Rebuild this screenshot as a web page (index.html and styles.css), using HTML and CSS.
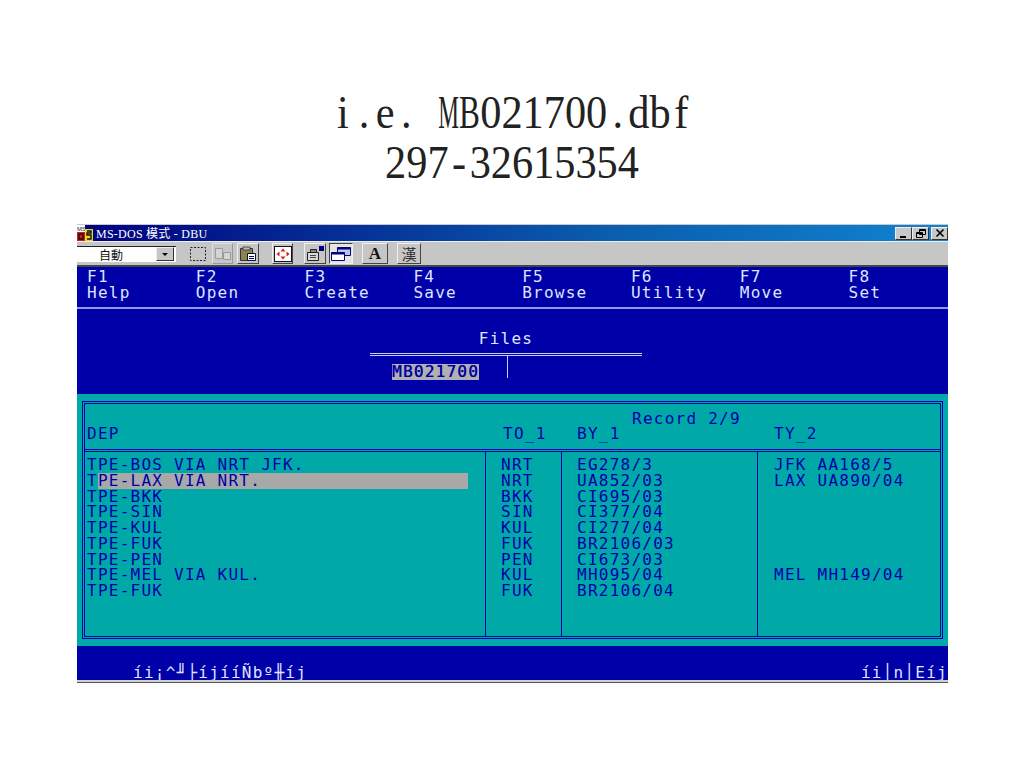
FILE: index.html
```html
<!DOCTYPE html>
<html>
<head>
    <title>MS-DOS - DBU</title>
    <link rel="stylesheet" href="styles.css">
</head>
<body>
    <div class="slide-title">
        <div class="title-line"><span>i</span><span>.</span><span>e</span><span>.</span><span> </span><span class="cap-m">M</span><span class="cap-b">B</span><span>0</span><span>2</span><span>1</span><span>7</span><span>0</span><span>0</span><span>.</span><span>d</span><span>b</span><span>f</span></div>
        <div class="title-line"><span>2</span><span>9</span><span>7</span><span>-</span><span>3</span><span>2</span><span>6</span><span>1</span><span>5</span><span>3</span><span>5</span><span>4</span></div>
    </div>

    <div class="window">
        <div class="titlebar">
            <svg class="app-icon" width="16" height="16" viewBox="0 0 16 16">
                <rect x="0" y="0" width="8" height="8" fill="#fff"/>
                <text x="0" y="6" class="ms-text">MS</text>
                <rect x="0" y="7" width="8" height="9" fill="#e01818"/>
                <rect x="8" y="4" width="8" height="12" fill="#e8d820"/>
                <path d="M2 9h4v5H2zM10 6h4v2h-4v2h4v4h-4" fill="none" stroke="#111" stroke-width="1.4"/>
            </svg>
            <span class="title-text">MS-DOS 模式 - DBU</span>
            <div class="win-buttons">
                <div class="win-btn"><svg width="14" height="12" viewBox="0 0 14 12"><path d="M3 9h6v2H3z" fill="#000"/></svg></div>
                <div class="win-btn"><svg width="14" height="12" viewBox="0 0 14 12"><path d="M5.500 2.500h6v5h-6zM5.500 3.500h6M2.500 5.500h6v5h-6zM2.500 6.500h6" fill="none" stroke="#000"/></svg></div>
                <div class="win-btn close-btn"><svg width="14" height="12" viewBox="0 0 14 12"><path d="M3.500 2.500l7 7M10.500 2.500l-7 7" fill="none" stroke="#000" stroke-width="1.6"/></svg></div>
            </div>
        </div>

        <div class="toolbar">
            <div class="combo">
                <span class="combo-text">自動</span>
                <div class="combo-btn"><svg width="8" height="6" viewBox="0 0 8 6"><path d="M1 2h6L4 5z" fill="#000"/></svg></div>
            </div>
            <div class="tool t-mark"><svg width="18" height="16" viewBox="0 0 18 16"><rect x="1.500" y="1.500" width="15" height="13" fill="none" stroke="#222" stroke-dasharray="2 1.500"/></svg></div>
            <div class="tool t-copy"><svg width="18" height="16" viewBox="0 0 18 16"><path d="M1.500 2.500h7v10h-7zM9.500 6.500h7v7h-7z" fill="#d4d4d4" stroke="#9a9a9a"/></svg></div>
            <div class="tool t-paste"><svg width="18" height="16" viewBox="0 0 18 16"><path d="M1.500 2.500h12v12h-12z" fill="#8c8450" stroke="#333"/><path d="M4 1h7v3H4z" fill="#bbb" stroke="#333" stroke-width=".8"/><path d="M8.500 7.500h8v7h-8z" fill="#fff" stroke="#112"/><path d="M10 10h5v1h-5zM10 12h5v1h-5z" fill="#000080"/></svg></div>
            <div class="tool t-full"><svg width="20" height="18" viewBox="0 0 20 18"><rect x="1.500" y="1.500" width="17" height="15" fill="#fff" stroke="#112"/><path d="M10 3.500l2.500 3h-5zM10 14.500l2.500-3h-5zM3.500 9l3-2.500v5zM16.500 9l-3-2.500v5z" fill="#d02020"/></svg></div>
            <div class="tool t-prop"><svg width="20" height="18" viewBox="0 0 20 18"><path d="M2.500 7.500h11v8h-11z" fill="#d8d8d8" stroke="#222"/><path d="M5.500 4.500h6v3h-6z" fill="#888" stroke="#222"/><path d="M14 1h5v5h-5z" fill="#000080"/><path d="M5 10h6v1H5zM5 12h6v1H5z" fill="#444"/></svg></div>
            <div class="tool t-back pressed"><svg width="20" height="18" viewBox="0 0 20 18"><path d="M6.500 2.500h13v8h-13z" fill="#b8c4e0" stroke="#000080"/><path d="M6.500 2.500h13v2h-13z" fill="#000080"/><path d="M.5 7.500h13v8H.5z" fill="#fff" stroke="#000080"/><path d="M.5 7.500h13v2H.5z" fill="#000080"/></svg></div>
            <div class="tool t-font"><span class="font-a">A</span></div>
            <div class="tool t-han"><span class="han">漢</span></div>
        </div>

        <div class="screen">
            <div class="menu">
                <div class="menu-item">F1<br>Help</div>
                <div class="menu-item">F2<br>Open</div>
                <div class="menu-item">F3<br>Create</div>
                <div class="menu-item">F4<br>Save</div>
                <div class="menu-item">F5<br>Browse</div>
                <div class="menu-item">F6<br>Utility</div>
                <div class="menu-item">F7<br>Move</div>
                <div class="menu-item">F8<br>Set</div>
            </div>

            <div class="files">
                <div class="files-title">Files</div>
                <div class="files-box">
                    <div class="files-cell"><span class="file-name">MB021700</span></div>
                    <div class="files-cell files-right"></div>
                </div>
            </div>

            <div class="teal">
                <div class="panel">
                    <div class="panel-head">
                        <div class="head-dep">DEP</div>
                        <div class="head-to">TO_1</div>
                        <div class="head-by">BY_1</div>
                        <div class="head-ty">TY_2</div>
                        <div class="record">Record 2/9</div>
                    </div>
                    <div class="panel-body">
                        <div class="col col-dep">
                            <div>TPE-BOS VIA NRT JFK.</div>
                            <div class="selected"><span class="first-char">T</span><span class="sel-bar">PE-LAX VIA NRT.</span></div>
                            <div>TPE-BKK</div>
                            <div>TPE-SIN</div>
                            <div>TPE-KUL</div>
                            <div>TPE-FUK</div>
                            <div>TPE-PEN</div>
                            <div>TPE-MEL VIA KUL.</div>
                            <div>TPE-FUK</div>
                        </div>
                        <div class="col col-to">
                            <div>NRT</div>
                            <div>NRT</div>
                            <div>BKK</div>
                            <div>SIN</div>
                            <div>KUL</div>
                            <div>FUK</div>
                            <div>PEN</div>
                            <div>KUL</div>
                            <div>FUK</div>
                        </div>
                        <div class="col col-by">
                            <div>EG278/3</div>
                            <div>UA852/03</div>
                            <div>CI695/03</div>
                            <div>CI377/04</div>
                            <div>CI277/04</div>
                            <div>BR2106/03</div>
                            <div>CI673/03</div>
                            <div>MH095/04</div>
                            <div>BR2106/04</div>
                        </div>
                        <div class="col col-ty">
                            <div>JFK AA168/5</div>
                            <div>LAX UA890/04</div>
                            <div>&nbsp;</div>
                            <div>&nbsp;</div>
                            <div>&nbsp;</div>
                            <div>&nbsp;</div>
                            <div>&nbsp;</div>
                            <div>MEL MH149/04</div>
                        </div>
                    </div>
                </div>
            </div>

            <div class="status">
                <span>íi¡^╜├íjííÑbº╫íj</span>
                <span>íi│n│Eíj</span>
            </div>
        </div>
        <div class="window-edge"></div>
    </div>
</body>
</html>
```

FILE: styles.css
```css
html, body {
    margin: 0;
    padding: 0;
    background-color: white;
}
body {
    height: 768px;
    overflow: hidden;
}
.slide-title {
    padding-top: 87px;
    height: 224px;
    box-sizing: border-box;
    font-family: "Liberation Serif", serif;
    font-size: 47px;
    line-height: 50px;
    color: #222;
}
.title-line {
    display: flex;
    justify-content: center;
    height: 50px;
    transform: scaleX(0.9);
}
.title-line span {
    display: block;
    width: 23.5px;
    text-align: center;
    white-space: pre;
}
.title-line .cap-m {
    text-align: left;
    transform: scaleX(0.55);
    transform-origin: left;
}
.title-line .cap-b {
    text-align: left;
    transform: scaleX(0.74);
    transform-origin: left;
}
.window {
    width: 871px;
    margin-left: 77px;
}
.titlebar {
    height: 17px;
    display: flex;
    align-items: center;
    background: linear-gradient(to right, #000080, #0a5cae 60%, #1084d0);
    border-top: 1px solid #c8c8c8;
    box-sizing: border-box;
}
.app-icon {
    flex: none;
}
.ms-text {
    font-family: "Liberation Sans", sans-serif;
    font-size: 6px;
    fill: #223;
}
.title-text {
    margin-left: 3px;
    color: white;
    font-family: "Liberation Serif", "Noto Sans CJK TC", serif;
    font-size: 12px;
    letter-spacing: 0.25px;
}
.win-buttons {
    margin-left: auto;
    display: flex;
}
.win-btn {
    width: 17px;
    height: 13px;
    background-color: #c8c8c8;
    border: 1px solid;
    border-color: #eee #333 #333 #eee;
    box-sizing: border-box;
    display: flex;
    align-items: center;
    justify-content: center;
}
.win-btn svg {
    flex: none;
}
.close-btn {
    margin-left: 2px;
}
.toolbar {
    height: 26px;
    background-color: #c6c6c6;
    border-top: 1px solid #eee;
    border-bottom: 2px solid #444;
    box-sizing: border-box;
    display: flex;
    align-items: center;
}
.combo {
    width: 99px;
    height: 16px;
    background-color: white;
    border-top: 1px solid #222;
    box-sizing: border-box;
    display: flex;
    align-items: center;
    justify-content: space-between;
    flex: none;
}
.combo-text {
    margin-left: 22px;
    font-family: "Noto Sans CJK TC", sans-serif;
    font-size: 12px;
    color: #111;
}
.combo-btn {
    width: 18px;
    height: 14px;
    margin-right: 2px;
    background-color: #c6c6c6;
    border: 1px solid;
    border-color: #eee #333 #333 #eee;
    box-sizing: border-box;
    display: flex;
    align-items: center;
    justify-content: center;
}
.tool {
    height: 21px;
    flex: none;
    box-sizing: border-box;
    display: flex;
    align-items: center;
    justify-content: center;
    border: 1px solid;
    border-color: #f0f0f0 #444 #444 #f0f0f0;
    background-color: #c6c6c6;
}
.tool svg {
    flex: none;
}
.t-mark { margin-left: 12px; width: 20px; border-color: transparent; }
.t-copy { margin-left: 4px; width: 21px; border-color: #e0e0e0 #999 #999 #e0e0e0; }
.t-paste { margin-left: 4px; width: 22px; }
.t-full { margin-left: 13px; width: 21px; }
.t-prop { margin-left: 11px; width: 22px; }
.t-back { margin-left: 3px; width: 24px; }
.t-font { margin-left: 9px; width: 26px; }
.t-han { margin-left: 9px; width: 24px; }
.pressed {
    border-color: #444 #f0f0f0 #f0f0f0 #444;
    background-color: #e4e4e4;
}
.font-a {
    font-family: "Liberation Serif", serif;
    font-weight: bold;
    font-size: 17px;
    line-height: 18px;
    color: #111;
}
.han {
    font-family: "Noto Sans CJK TC", sans-serif;
    font-size: 15px;
    line-height: 18px;
    color: #333;
}

/* text mode screen, 80 columns at 10.88px */
.screen {
    font-family: "DejaVu Sans Mono", monospace;
    font-size: 16px;
    letter-spacing: 1.25px;
    background-color: #0000a8;
    color: #dfe4ff;
}
.menu {
    height: 38px;
    padding: 2px 0 0 10px;
    display: grid;
    grid-template-columns: repeat(8, 108.8px);
    line-height: 16px;
    border-bottom: 2px solid #8a9ce8;
}
.files {
    height: 85px;
    padding-right: 13px;
    display: flex;
    flex-direction: column;
    align-items: center;
}
.files-title {
    margin-top: 22px;
    height: 16px;
    line-height: 16px;
}
.files-box {
    margin-top: 6px;
    width: 272px;
    height: 26px;
    border-top: 3px double #c8d0ff;
    box-sizing: border-box;
    display: flex;
}
.files-cell {
    width: 138px;
    height: 22px;
    border-right: 1px solid #c8d0ff;
    box-sizing: border-box;
    padding-left: 22px;
    padding-top: 6px;
}
.files-right {
    border-right: none;
    width: 134px;
}
.file-name {
    display: inline-block;
    background-color: #b0b0b0;
    color: #0000a8;
    line-height: 16px;
    text-shadow: 0.3px 0 0 currentColor;
}
.teal {
    height: 252px;
    background-color: #00a8a8;
    padding: 7px 5px 0;
    box-sizing: border-box;
    color: #0000a8;
}
.panel {
    height: 238px;
    border: 3px double #0000a8;
    box-sizing: border-box;
}
.panel-head {
    position: relative;
    height: 45px;
    border-bottom: 3px double #0000a8;
}
.panel-head div {
    position: absolute;
    top: 22px;
    line-height: 16px;
}
.head-dep { left: 2px; }
.head-to { left: 418px; }
.head-by { left: 492px; }
.head-ty { left: 689px; }
.panel-head .record {
    left: 547px;
    top: 7px;
}
.panel-body {
    display: flex;
    height: 184px;
    line-height: 15.75px;
}
.col {
    box-sizing: border-box;
    padding-top: 5px;
    border-right: 1px solid #0000a8;
    white-space: nowrap;
}
.col-dep { width: 401px; padding-left: 2px; }
.col-to { width: 76px; padding-left: 15px; }
.col-by { width: 196px; padding-left: 15px; }
.col-ty { flex: 1; padding-left: 16px; border-right: none; }
.selected {
    display: flex;
}
.sel-bar {
    width: 370px;
    background-color: #a8a8a8;
    flex: none;
}
.status {
    height: 34px;
    padding: 19px 0 0 56px;
    box-sizing: border-box;
    display: flex;
    justify-content: space-between;
    line-height: 16px;
    overflow: hidden;
    white-space: nowrap;
}
.window-edge {
    height: 3px;
    background: linear-gradient(#d0d0d0 50%, #555 50%);
}
```
